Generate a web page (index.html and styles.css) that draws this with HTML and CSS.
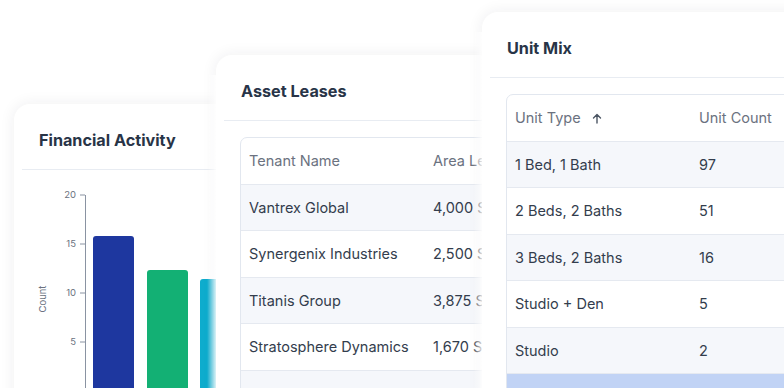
FILE: index.html
```html
<!DOCTYPE html>
<html lang="en">
<head>
  <meta charset="UTF-8">
  <meta name="viewport" content="width=device-width, initial-scale=1.0">
  <title>Portfolio Widgets</title>
  <link rel="stylesheet" href="styles.css">
</head>
<body>
  <div class="stage">
    <div class="card card-activity">
      <div class="card-head"><h3>Financial Activity</h3></div>
      <div class="chart">
        <svg width="300" height="230" viewBox="0 0 300 230">
          <text class="axis-title" x="24" y="129" transform="rotate(-90 24 129)" text-anchor="middle">Count</text>
          <g class="ticks">
            <text x="54" y="28" text-anchor="end">20</text>
            <text x="54" y="77" text-anchor="end">15</text>
            <text x="54" y="126" text-anchor="end">10</text>
            <text x="54" y="175" text-anchor="end">5</text>
            <line x1="58" y1="25" x2="63" y2="25"/>
            <line x1="58" y1="74" x2="63" y2="74"/>
            <line x1="58" y1="123" x2="63" y2="123"/>
            <line x1="58" y1="172" x2="63" y2="172"/>
            <line x1="63.5" y1="25" x2="63.5" y2="230"/>
          </g>
          <path class="bar bar-blue" d="M71 230V69a3 3 0 0 1 3-3h35a3 3 0 0 1 3 3V230z"/>
          <path class="bar bar-green" d="M125 230V103a3 3 0 0 1 3-3h35a3 3 0 0 1 3 3V230z"/>
          <path class="bar bar-cyan" d="M178 230V112a3 3 0 0 1 3-3h35a3 3 0 0 1 3 3V230z"/>
        </svg>
      </div>
    </div>

    <div class="card card-leases">
      <div class="card-head"><h3>Asset Leases</h3></div>
      <div class="card-body">
        <div class="table">
          <div class="row head"><span>Tenant Name</span><span>Area Leased</span></div>
          <div class="row"><span>Vantrex Global</span><span>4,000 SF</span></div>
          <div class="row"><span>Synergenix Industries</span><span>2,500 SF</span></div>
          <div class="row"><span>Titanis Group</span><span>3,875 SF</span></div>
          <div class="row"><span>Stratosphere Dynamics</span><span>1,670 SF</span></div>
          <div class="row"><span>Quorvia Labs</span><span>2,200 SF</span></div>
        </div>
      </div>
    </div>

    <div class="card card-units">
      <div class="card-head"><h3>Unit Mix</h3></div>
      <div class="card-body">
        <div class="table">
          <div class="row head">
            <span class="sort">Unit Type<svg width="10" height="11" viewBox="0 0 10 11"><path d="M5 10V1.5M1.5 5L5 1.5 8.5 5" fill="none" stroke="#4b5563" stroke-width="1.4" stroke-linecap="round" stroke-linejoin="round"/></svg></span>
            <span>Unit Count</span>
          </div>
          <div class="row"><span>1 Bed, 1 Bath</span><span>97</span></div>
          <div class="row"><span>2 Beds, 2 Baths</span><span>51</span></div>
          <div class="row"><span>3 Beds, 2 Baths</span><span>16</span></div>
          <div class="row"><span>Studio + Den</span><span>5</span></div>
          <div class="row"><span>Studio</span><span>2</span></div>
          <div class="row selected"><span>Total</span><span>171</span></div>
        </div>
      </div>
    </div>
  </div>
</body>
</html>
```

FILE: styles.css
```css
* {
  box-sizing: border-box;
}
body {
  margin: 0;
  font-family: Inter, 'Noto Sans', sans-serif;
  background-color: #fff;
  color: #2b3445;
  overflow: hidden;
}
.stage {
  position: relative;
  width: 784px;
  height: 388px;
  overflow: hidden;
}

/* cards sit on a free canvas, stacked over each other */
.card {
  position: absolute;
  background: #fff;
  border-radius: 16px;
  padding: 8px;
  height: 460px;
  box-shadow: 0 0 14px 2px rgba(30, 41, 59, 0.06);
}
.card::before {
  content: '';
  position: absolute;
  top: 20px;
  bottom: 0;
  left: -9px;
  width: 9px;
  background: linear-gradient(to right, rgba(255,255,255,0), rgba(255,255,255,0.85));
}
.card-activity {
  left: 14px;
  top: 104px;
  width: 320px;
}
.card-activity::before {
  display: none;
}
.card-leases {
  left: 216px;
  top: 55px;
  width: 420px;
}
.card-units {
  left: 482px;
  top: 12px;
  width: 420px;
}
.card-head {
  padding: 17px 17px 18px;
  border-bottom: 1px solid #e8ecf2;
}
.card-head h3 {
  margin: 0;
  font-size: 16.2px;
  line-height: 22px;
  font-weight: 700;
  color: #283447;
}
.card-body {
  padding: 16px 16px;
}

/* chart */
.chart svg {
  display: block;
}
.ticks text, .axis-title {
  font-size: 9.5px;
  fill: #6b7280;
}
.ticks line {
  stroke: #8a93a2;
  stroke-width: 1;
}
.bar-blue {
  fill: #1e379f;
}
.bar-green {
  fill: #13b074;
}
.bar-cyan {
  fill: #0eaccd;
}

/* tables */
.table {
  border: 1px solid #e2e7ef;
  border-radius: 7px;
  overflow: hidden;
}
.row {
  display: grid;
  grid-template-columns: 184px 1fr;
  font-size: 14.5px;
  line-height: 20px;
  color: #333d4d;
  border-top: 1px solid #e5e9f0;
  white-space: nowrap;
}
.row span {
  padding: 12.75px 8px;
}
.row:nth-child(even) {
  background: #f5f7fb;
}
.row.head {
  border-top: none;
  color: #6b7280;
}
.row.head span {
  padding-top: 13px;
}
.row.selected {
  background: #c1d3f5;
}
.sort svg {
  margin-left: 11px;
  vertical-align: -1px;
}
```
